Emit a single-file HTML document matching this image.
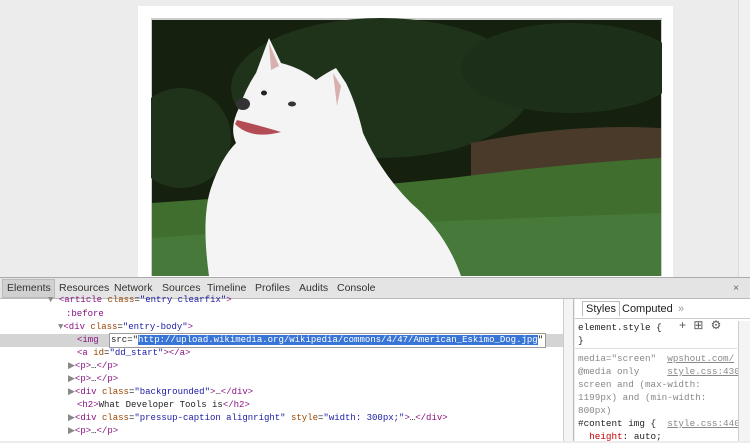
<!DOCTYPE html>
<html><head><style>
*{margin:0;padding:0;box-sizing:border-box}
body{width:750px;height:441px;overflow:hidden;background:#ececec;position:relative;font-family:"Liberation Sans",sans-serif}
.card{position:absolute;left:138px;top:6px;width:535px;height:272px;background:#fff}
.sb{position:absolute;left:738px;top:0;width:12px;height:277px;background:#f0f0f0;border-left:1px solid #ddd}
.tb{position:absolute;left:0;top:277px;width:750px;height:22px;background:#e4e4e4;border-top:1px solid #aaa;border-bottom:1px solid #bbb;font-size:10.5px;color:#333}
.tb span{position:absolute;top:4px}
.el{position:absolute;left:0;top:299px;width:563px;height:142px;background:#fff;font-family:"Liberation Mono",monospace;font-size:9px;color:#222}
.ln{position:absolute;height:13px;line-height:13px;white-space:pre}
.t{color:#881280}.a{color:#994500}.v{color:#1a1aa6}
.vs{position:absolute;left:563px;top:299px;width:11px;height:142px;background:#f4f4f4;border-left:1px solid #ccc;border-right:1px solid #bbb}
.rp{position:absolute;left:575px;top:299px;width:175px;height:142px;background:#fff;font-family:"Liberation Mono",monospace;font-size:9.3px;color:#222}
.g{color:#888}
</style></head><body>
<div class="card"></div>
<svg style="position:absolute;left:151px;top:18px" width="511" height="258" viewBox="0 0 511 258">
<rect x="0" y="0" width="511" height="258" fill="#ccc"/>
<rect x="1" y="2" width="509" height="256" fill="#15200f"/>
<ellipse cx="230" cy="70" rx="150" ry="70" fill="#1f331b"/>
<ellipse cx="420" cy="50" rx="110" ry="45" fill="#1c3019"/>
<ellipse cx="30" cy="120" rx="50" ry="50" fill="#1f331b"/>
<path d="M320 125 Q420 105 510 110 L510 150 L320 160Z" fill="#4a3a2a"/>
<path d="M1 185 Q150 175 300 160 Q420 145 510 140 L510 258 L1 258Z" fill="#3f6e2e"/>
<path d="M1 220 Q200 205 510 195 L510 258 L1 258Z" fill="#46793a"/>
<path d="M58 258 Q50 200 60 170 Q70 140 85 125 Q78 110 88 90 Q95 70 105 55 L118 20 L130 45 Q150 50 165 62 Q175 55 185 50 L195 65 Q205 85 212 115 Q230 155 260 185 Q295 215 310 258Z" fill="#f4f4f4"/>
<path d="M118 25 L128 48 L120 52Z" fill="#d8b0b0"/>
<path d="M182 55 L190 68 L186 88Z" fill="#d8b0b0"/>
<ellipse cx="92" cy="86" rx="7" ry="6" fill="#333"/>
<ellipse cx="113" cy="75" rx="3" ry="2.5" fill="#222"/>
<ellipse cx="141" cy="86" rx="4" ry="2.5" fill="#333"/>
<path d="M84 106 Q100 122 130 114 Q110 108 86 102Z" fill="#b24d55"/>
</svg>
<div class="sb"></div>
<div class="tb">
<div style="position:absolute;left:2px;top:1px;width:53px;height:19px;background:#d0d0d0;border:1px solid #bbb"></div>
<span style="left:7px">Elements</span><span style="left:59px">Resources</span><span style="left:114px">Network</span><span style="left:162px">Sources</span><span style="left:207px">Timeline</span><span style="left:255px">Profiles</span><span style="left:299px">Audits</span><span style="left:337px">Console</span>
<span style="left:733px;color:#666">×</span>
</div>
<div class="el">
<div class="ln" style="left:48px;top:-5px"><span class="g">▼</span> <span class="t">&lt;article</span> <span class="a">class</span>=<span class="v">"entry clearfix"</span><span class="t">&gt;</span></div>
<div class="ln" style="left:66px;top:9px;color:#881280">:before</div>
<div class="ln" style="left:58px;top:22px"><span class="g">▼</span><span class="t">&lt;div</span> <span class="a">class</span>=<span class="v">"entry-body"</span><span class="t">&gt;</span></div>
<div style="position:absolute;left:0;top:35px;width:563px;height:13px;background:#d4d4d4"></div>
<div class="ln" style="left:77px;top:35px"><span class="t">&lt;img</span></div>
<div style="position:absolute;left:109px;top:34px;width:437px;height:15px;background:#fff;border:1px solid #999"></div>
<div class="ln" style="left:111px;top:35px">src="<span style="background:#3875d7;color:#fff">http://upload.wikimedia.org/wikipedia/commons/4/47/American_Eskimo_Dog.jpg</span>"</div>
<div class="ln" style="left:77px;top:48px"><span class="t">&lt;a</span> <span class="a">id</span>=<span class="v">"dd_start"</span><span class="t">&gt;&lt;/a&gt;</span></div>
<div class="ln" style="left:68px;top:61px"><span class="g">▶</span><span class="t">&lt;p&gt;</span>…<span class="t">&lt;/p&gt;</span></div>
<div class="ln" style="left:68px;top:74px"><span class="g">▶</span><span class="t">&lt;p&gt;</span>…<span class="t">&lt;/p&gt;</span></div>
<div class="ln" style="left:68px;top:87px"><span class="g">▶</span><span class="t">&lt;div</span> <span class="a">class</span>=<span class="v">"backgrounded"</span><span class="t">&gt;</span>…<span class="t">&lt;/div&gt;</span></div>
<div class="ln" style="left:77px;top:100px"><span class="t">&lt;h2&gt;</span>What Developer Tools is<span class="t">&lt;/h2&gt;</span></div>
<div class="ln" style="left:68px;top:113px"><span class="g">▶</span><span class="t">&lt;div</span> <span class="a">class</span>=<span class="v">"pressup-caption alignright"</span> <span class="a">style</span>=<span class="v">"width: 300px;"</span><span class="t">&gt;</span>…<span class="t">&lt;/div&gt;</span></div>
<div class="ln" style="left:68px;top:126px"><span class="g">▶</span><span class="t">&lt;p&gt;</span>…<span class="t">&lt;/p&gt;</span></div>
</div>
<div class="vs"></div>
<div class="rp">
<div style="position:absolute;left:0;top:0;width:175px;height:20px;border-bottom:1px solid #ccc;font-family:'Liberation Sans',sans-serif;font-size:11px">
<span style="position:absolute;left:7px;top:2px;border:1px solid #bbb;border-bottom:none;padding:1px 3px;background:#fff">Styles</span>
<span style="position:absolute;left:47px;top:4px">Computed</span><span style="position:absolute;left:103px;top:4px;color:#999">»</span></div>
<div class="ln" style="left:3px;top:22px">element.style {</div>
<div class="ln" style="left:104px;top:21px;color:#555;font-size:12px">+ ⊞ ⚙</div>
<div class="ln" style="left:3px;top:35px">}</div>
<div style="position:absolute;left:0;top:49px;width:162px;height:1px;background:#ddd"></div>
<div class="ln g" style="left:3px;top:53px">media="screen"  <u>wpshout.com/</u></div>
<div class="ln g" style="left:3px;top:66px">@media only     <u>style.css:430</u></div>
<div class="ln g" style="left:3px;top:79px">screen and (max-width:</div>
<div class="ln g" style="left:3px;top:92px">1199px) and (min-width:</div>
<div class="ln g" style="left:3px;top:105px">800px)</div>
<div class="ln" style="left:3px;top:118px">#content img {  <u class="g">style.css:440</u></div>
<div class="ln" style="left:3px;top:131px">  <span style="color:#c80000">height</span>: auto;</div>
<div style="position:absolute;left:163px;top:22px;width:12px;height:120px;background:#f4f4f4;border-left:1px solid #ccc"></div>
</div>
</body></html>
